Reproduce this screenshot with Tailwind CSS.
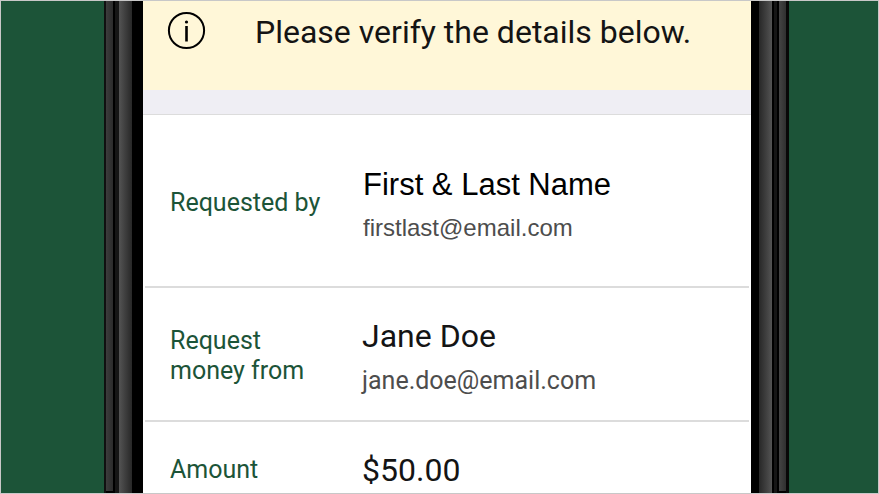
<!DOCTYPE html>
<html lang="en">
<head>
    <meta charset="UTF-8">
    <meta name="viewport" content="width=device-width, initial-scale=1.0">
    <title>Request money</title>
    <script src="https://cdn.jsdelivr.net/npm/@tailwindcss/browser@4"></script>
</head>
<body class="bg-[#1c5438] font-[Roboto,sans-serif] text-[#141414]">
    <div class="flex min-h-screen border border-[#c8c8c8] pl-[103px] pr-[89px]">
        <!-- left side of the phone -->
        <div class="flex shrink-0 flex-col bg-black">
            <div class="flex flex-1">
                <div class="w-[2px] bg-[#101010]"></div>
                <div class="mb-[2px] w-[7px] bg-linear-to-r from-[#3c3c3c] to-[#2c2c2c]"></div>
                <div class="w-[2px] bg-black"></div>
                <div class="w-[4px] bg-[#161616]"></div>
                <div class="w-[13px] bg-linear-to-r from-[#545454] to-[#282828]"></div>
                <div class="w-[11px] bg-black"></div>
            </div>
        </div>
        <main class="flex min-w-0 flex-1 flex-col bg-white">
            <div class="flex h-[89px] items-start bg-[#fff7d8] pl-6 pt-[10px]">
                <svg class="size-10 shrink-0" viewBox="0 0 40 40" fill="none" stroke="#000">
                    <circle cx="19.5" cy="19.5" r="17.6" stroke-width="2"/>
                    <path d="M19.5 15v15.5" stroke-width="2.6"/>
                    <circle cx="19.5" cy="11" r="1.6" fill="#000" stroke="none"/>
                </svg>
                <p class="pl-12 text-[32px] leading-[42px]">Please verify the details below.</p>
            </div>
            <div class="h-[25px] border-b border-[#dcdcdc] bg-[#efeef4]"></div>
            <dl class="flex flex-1 flex-col px-[2px]">
                <div class="flex h-[173px] items-center border-b-2 border-[#dcdcdc] pl-[25px]">
                    <dt class="w-48 shrink-0 pt-1 text-[25px] leading-[30px] text-[#1c5438]">Requested by</dt>
                    <dd class="pl-px pt-[10px] font-['Liberation_Sans',Arial,sans-serif]">
                        <p class="text-[31px] leading-[44px] text-black">First &amp; Last Name</p>
                        <p class="text-2xl leading-[42px] text-[#4d4d4d]">firstlast@email.com</p>
                    </dd>
                </div>
                <div class="flex h-[134px] items-center border-b-2 border-[#dcdcdc] pl-[25px]">
                    <dt class="w-48 shrink-0 pt-1 text-[25px] leading-[30px] text-[#1c5438]">Request<br>money from</dt>
                    <dd class="pt-[10px]">
                        <p class="text-[32px] leading-[44px]">Jane Doe</p>
                        <p class="text-[25px] leading-[46px] text-[#4d4d4d]">jane.doe@email.com</p>
                    </dd>
                </div>
                <div class="flex items-center pl-[25px] pt-[26px]">
                    <dt class="w-48 shrink-0 text-[25px] leading-[30px] text-[#1c5438]">Amount</dt>
                    <dd class="text-[32px] leading-[44px]">$50.00</dd>
                </div>
            </dl>
        </main>
        <!-- right side of the phone -->
        <div class="flex shrink-0 flex-col bg-black">
            <div class="flex flex-1">
                <div class="w-[8px] bg-black"></div>
                <div class="w-[13px] bg-linear-to-r from-[#282828] to-[#545454]"></div>
                <div class="w-[2px] bg-black"></div>
                <div class="w-[3px] bg-[#161616]"></div>
                <div class="w-[2px] bg-black"></div>
                <div class="mb-[2px] w-[7px] bg-linear-to-r from-[#444] to-[#303030]"></div>
                <div class="w-[3px] bg-[#080808]"></div>
            </div>
        </div>
    </div>
</body>
</html>
